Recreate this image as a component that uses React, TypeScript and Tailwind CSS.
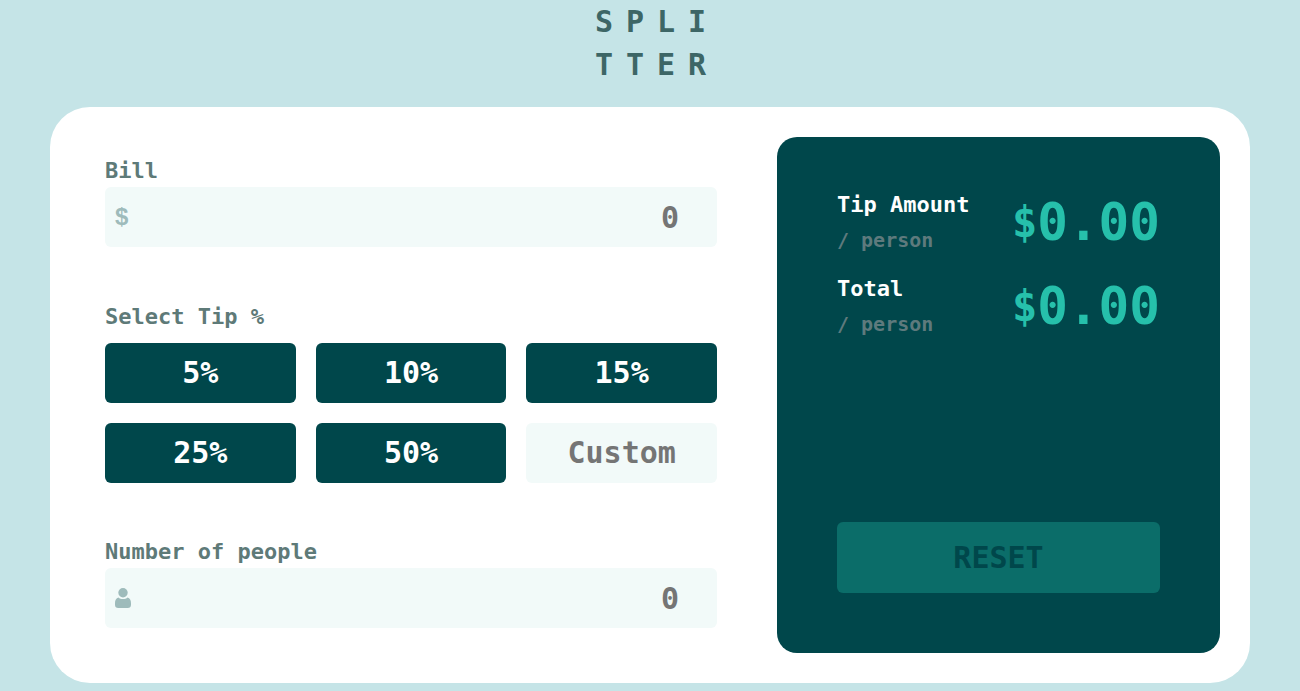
import { useState } from "react"
import type { ReactNode } from "react"

const tips = [5, 10, 15, 25, 50]

function PersonIcon() {
  return (
    <svg viewBox="0 0 16 20" className="h-5 w-4" fill="currentColor" aria-hidden="true">
      <circle cx="8" cy="4.7" r="4.7" />
      <path d="M3.4 9.4C1.2 9.9 0 12.2 0 15v1.8C0 18.900 1.200 20 3.200 20h9.600c2 0 3.200-1.100 3.200-3.200V15c0-2.800-1.200-5.100-3.400-5.600-1.200 1-2.800 1.600-4.600 1.600S4.600 10.400 3.400 9.400Z" />
    </svg>
  )
}

type FieldProps = {
  id: string
  label: string
  icon: ReactNode
  value: string
  onChange: (value: string) => void
}

function Field({ id, label, icon, value, onChange }: FieldProps) {
  return (
    <div>
      <label htmlFor={id} className="block text-[22px] leading-8 text-[#5e7a78]">
        {label}
      </label>
      <div className="flex h-[60px] items-center rounded-md bg-[#f2faf9] pl-[10px] text-[#9ebbbb]">
        {icon}
        <input
          id={id}
          inputMode="decimal"
          placeholder="0"
          value={value}
          onChange={(e) => onChange(e.target.value)}
          className="h-full min-w-0 flex-1 bg-transparent pr-[38px] text-right text-[30px] text-[#00474b] outline-none placeholder:text-[#757575]"
        />
      </div>
    </div>
  )
}

function Result({ title, amount }: { title: string; amount: number }) {
  return (
    <div className="flex items-center justify-between">
      <div>
        <h2 className="text-[22px] leading-8 text-white">{title}</h2>
        <p className="mt-[3px] text-[20px] leading-8 text-[#5e7a7d]">/ person</p>
      </div>
      <p className="flex items-center text-[51px] leading-none text-[#26c0ab]">
        <span className="text-[42px]">$</span>
        {amount.toFixed(2)}
      </p>
    </div>
  )
}

export default function App() {
  const [bill, setBill] = useState("")
  const [people, setPeople] = useState("")
  const [tip, setTip] = useState(0)
  const [custom, setCustom] = useState("")

  const count = Number(people) || 0
  const percent = Number(custom) || tip
  const tipTotal = ((Number(bill) || 0) * percent) / 100
  const tipAmount = count > 0 ? tipTotal / count : 0
  const total = count > 0 ? ((Number(bill) || 0) + tipTotal) / count : 0
  const untouched = !bill && !people && !tip && !custom

  const reset = () => {
    setBill("")
    setPeople("")
    setTip(0)
    setCustom("")
  }

  return (
    <div className="min-h-screen bg-[#c5e4e7] pb-2 font-['DejaVu_Sans_Mono',monospace] font-bold">
      <h1 className="pb-[21px] pl-[14px] text-center text-[30px] leading-[43px] tracking-[13px] text-[#3d6666]">
        SPLI
        <br />
        TTER
      </h1>

      <main className="mx-[50px] grid grid-cols-[612fr_443fr] gap-[60px] rounded-[40px] bg-white py-[30px] pr-[30px] pl-[55px]">
        <div className="flex flex-col justify-between pt-[18px] pb-[25px]">
          <Field
            id="bill"
            label="Bill"
            icon={<span className="font-['Liberation_Sans',sans-serif] text-[24px]">$</span>}
            value={bill}
            onChange={setBill}
          />

          <fieldset>
            <legend className="mb-[10px] text-[22px] leading-8 text-[#5e7a78]">Select Tip %</legend>
            <div className="grid grid-cols-3 gap-5">
              {tips.map((value) => (
                <button
                  key={value}
                  type="button"
                  onClick={() => setTip(value)}
                  className="h-[60px] rounded-md bg-[#00474b] text-[30px] text-white hover:bg-[#26c0ab]"
                >
                  {value}%
                </button>
              ))}
              <input
                aria-label="Custom tip"
                inputMode="decimal"
                placeholder="Custom"
                value={custom}
                onChange={(e) => setCustom(e.target.value)}
                className="h-[60px] w-full min-w-0 rounded-md bg-[#f2faf9] text-center text-[30px] text-[#00474b] outline-none placeholder:text-[#757575]"
              />
            </div>
          </fieldset>

          <Field
            id="people"
            label="Number of people"
            icon={<PersonIcon />}
            value={people}
            onChange={setPeople}
          />
        </div>

        <div className="flex min-h-[516px] flex-col justify-between rounded-[20px] bg-[#00474b] px-[60px] pt-[52px] pb-[60px]">
          <div className="space-y-[17px]">
            <Result title="Tip Amount" amount={tipAmount} />
            <Result title="Total" amount={total} />
          </div>
          <button
            type="button"
            onClick={reset}
            disabled={untouched}
            className="h-[71px] rounded-md bg-[#26c0ab] text-[30px] text-[#00474b] disabled:bg-[#0b6d69]"
          >
            RESET
          </button>
        </div>
      </main>
    </div>
  )
}
